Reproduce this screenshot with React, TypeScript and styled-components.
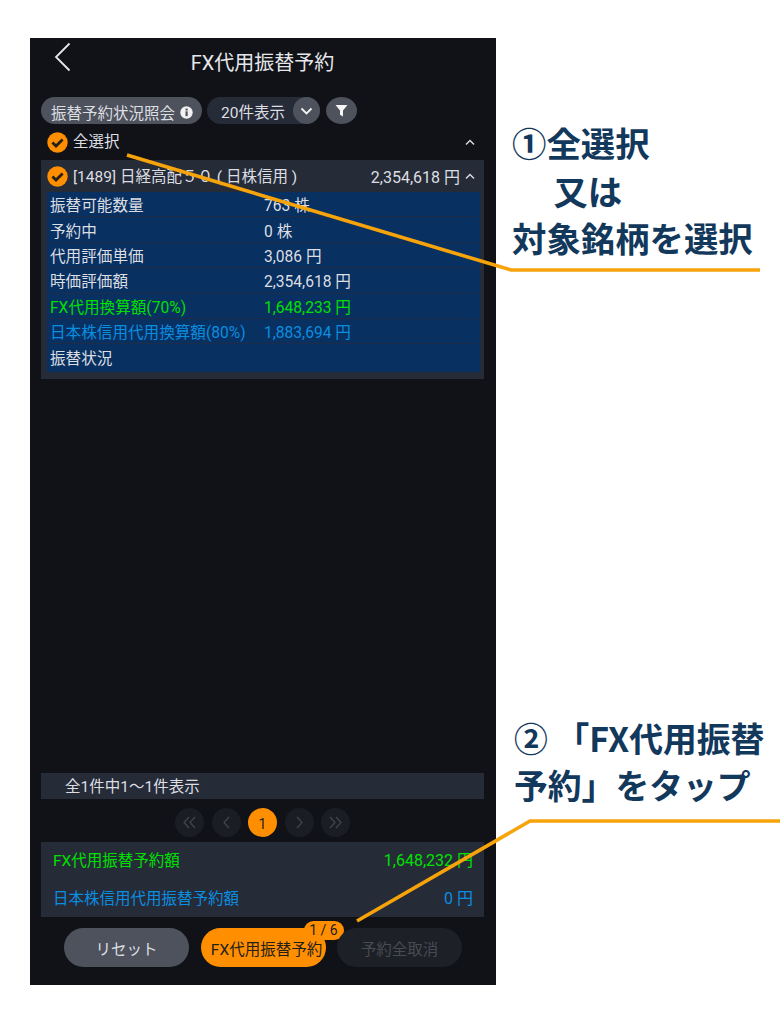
import React from "react";
import styled, { createGlobalStyle } from "styled-components";

const Global = createGlobalStyle`
  html, body { margin: 0; padding: 0; background: #fff; }
  * { box-sizing: border-box; }
  body { font-family: Roboto, "Noto Sans CJK JP", sans-serif; }
`;

const Page = styled.div`
  position: relative;
  width: 780px;
  height: 1024px;
  overflow: hidden;
  padding: 38px 0 39px 30px;
  display: flex;
  background: #fff;
`;
const Phone = styled.main`
  width: 466px;
  height: 947px;
  background: #101218;
  color: #dcdee2;
  padding: 0 12px 0 11px;
  display: flex;
  flex-direction: column;
  flex: none;
`;
const Header = styled.header`
  height: 46px;
  position: relative;
  display: flex;
  align-items: center;
  justify-content: center;
  font-size: 20px;
  padding-top: 1px;
  margin-bottom: 13px;
  color: #e6e7ea;
`;
const Back = styled.svg`
  position: absolute;
  left: 13px;
  top: 4px;
  width: 18px;
  height: 30px;
`;
const Chips = styled.div`
  display: flex;
  align-items: center;
  height: 27px;
`;
const StatusChip = styled.div`
  width: 161px;
  height: 27px;
  border-radius: 14px;
  background: #4e525c;
  display: flex;
  align-items: center;
  gap: 5px;
  padding: 2px 0 0 10px;
  font-size: 15.5px;
  white-space: nowrap;
  & > svg { margin-top: 1px; }
`;
const CountChip = styled.div`
  width: 113px;
  height: 27px;
  border-radius: 14px;
  background: #262b38;
  margin-left: 5px;
  display: flex;
  align-items: center;
  justify-content: space-between;
  padding-left: 14px;
  font-size: 15.5px;
`;
const RoundIcon = styled.span`
  width: 27px;
  height: 27px;
  border-radius: 50%;
  background: #4e525c;
  display: flex;
  align-items: center;
  justify-content: center;
`;
const FilterIcon = styled(RoundIcon)`
  width: 31px;
  margin-left: 6px;
`;
const SelectAll = styled.div`
  height: 36px;
  display: flex;
  align-items: center;
  padding: 0 9px 0 6px;
  gap: 6px;
  font-size: 15.5px;
  & > span { flex: 1; margin-top: -4px; margin-left: -1px; }
`;
const Card = styled.section`
  height: 219px;
  background: #262b38;
  padding: 0 4px 7px 6px;
  display: flex;
  flex-direction: column;
`;
const CardHead = styled.div`
  height: 32px;
  display: flex;
  align-items: center;
  gap: 6px;
  font-size: 15.5px;
  padding-right: 5px;
  white-space: pre;
`;
const CardTitle = styled.span`
  flex: 1;
  margin: -3px 0 0 -1px;
`;
const CardPrice = styled.span`
  font-size: 16px;
  margin-right: -1px;
`;
const Table = styled.div`
  background: #083060;
  flex: 1;
  padding: 0 3px;
`;
const Row = styled.div<{ $tone?: string }>`
  height: 25.4px;
  display: flex;
  align-items: center;
  font-size: 15.6px;
  color: ${(p) => p.$tone ?? "#dcdee2"};
  border-bottom: 1px solid #1d2c48;
  white-space: nowrap;
  &:last-child { border-bottom: none; }
`;
const RowLabel = styled.span`
  width: 214px;
`;
const Spacer = styled.div`
  flex: 1;
`;
const InfoBar = styled.div`
  height: 26px;
  background: #262b38;
  display: flex;
  align-items: center;
  padding: 0 0 2px 24px;
  font-size: 15.5px;
`;
const Pager = styled.nav`
  height: 43px;
  display: flex;
  align-items: center;
  justify-content: center;
  gap: 7.5px;
  padding-top: 3px;
`;
const PageDot = styled.span<{ $active?: boolean }>`
  width: 29px;
  height: 29px;
  border-radius: 50%;
  background: ${(p) => (p.$active ? "#ff8f00" : "#1a1d24")};
  color: #23201a;
  font-size: 14px;
  display: flex;
  align-items: center;
  justify-content: center;
  padding-top: ${(p) => (p.$active ? "4px" : "0")};
`;
const Summary = styled.section`
  height: 75px;
  background: #262b38;
  padding: 5px 11px 8px 12px;
  display: flex;
  flex-direction: column;
  justify-content: space-between;
`;
const SummaryRow = styled.div<{ $tone: string }>`
  display: flex;
  justify-content: space-between;
  align-items: center;
  color: ${(p) => p.$tone};
  font-size: 15.5px;
`;
const SummaryValue = styled.span`
  font-size: 16px;
`;
const Actions = styled.footer`
  height: 68px;
  display: flex;
  gap: 11.5px;
  padding: 11px 0 0 23px;
`;
const Action = styled.button<{ $bg: string; $fg: string; $shift?: number }>`
  position: relative;
  width: 125px;
  height: 39px;
  border: 0;
  padding: 0 0 0 ${(p) => p.$shift ?? 0}px;
  border-radius: 20px;
  background: ${(p) => p.$bg};
  color: ${(p) => p.$fg};
  font: inherit;
  font-size: 15.5px;
  white-space: nowrap;
`;
const Badge = styled.span`
  position: absolute;
  top: -7px;
  right: -18px;
  width: 40px;
  height: 19px;
  border-radius: 10px;
  background: #ff8f00;
  color: #23201a;
  font-size: 14px;
  line-height: 18px;
  text-align: center;
`;
const Notes = styled.aside`
  flex: 1;
  display: flex;
  flex-direction: column;
  color: #12385c;
  font-family: "Noto Sans CJK JP", sans-serif;
  font-weight: 700;
  white-space: pre;
`;
const NoteOne = styled.p`
  margin: 81px 0 0 16px;
  font-size: 34.4px;
  line-height: 47.5px;
`;
const Indented = styled.span`
  margin-left: 7px;
`;
const NoteTwo = styled.p`
  margin: 452px 0 0 18px;
  font-size: 33.8px;
  line-height: 47px;
`;
const Leaders = styled.svg`
  position: absolute;
  inset: 0;
  width: 780px;
  height: 1024px;
  pointer-events: none;
`;

const CheckMark = () => (
  <svg width="21" height="21" viewBox="0 0 21 21">
    <circle cx="10.5" cy="10.5" r="10.2" fill="#ff8f00" />
    <path d="M5.4 10.6l3.6 3.5 6.6-6.6" fill="none" stroke="#241f18" strokeWidth="2.8" />
  </svg>
);
const Caret = () => (
  <svg width="10" height="7" viewBox="0 0 10 7">
    <path d="M1 5.5L5 1.5l4 4" fill="none" stroke="#dcdee2" strokeWidth="1.4" />
  </svg>
);
const PageChevron = ({ d }: { d: string }) => (
  <svg width="17" height="15" viewBox="0 0 17 15">
    <path d={d} fill="none" stroke="#41444b" strokeWidth="1.3" />
  </svg>
);

const rows: [string, string, string?][] = [
  ["振替可能数量", "763 株"],
  ["予約中", "0 株"],
  ["代用評価単価", "3,086 円"],
  ["時価評価額", "2,354,618 円"],
  ["FX代用換算額(70%)", "1,648,233 円", "#00e000"],
  ["日本株信用代用換算額(80%)", "1,883,694 円", "#0a8ee0"],
  ["振替状況", ""],
];

export default function App() {
  return (
    <Page>
      <Global />
      <Phone>
        <Header>
          <Back viewBox="0 0 18 30">
            <path d="M15.5 1.5L2 15l13.5 13.5" fill="none" stroke="#e6e7ea" strokeWidth="1.8" />
          </Back>
          FX代用振替予約
        </Header>
        <Chips>
          <StatusChip>
            振替予約状況照会
            <svg width="13" height="13" viewBox="0 0 13 13">
              <circle cx="6.5" cy="6.5" r="6.2" fill="#f2f2f2" />
              <rect x="5.5" y="5.3" width="2.2" height="4.8" fill="#4e525c" />
              <rect x="5.5" y="2.6" width="2.2" height="1.9" fill="#4e525c" />
            </svg>
          </StatusChip>
          <CountChip>
            20件表示
            <RoundIcon>
              <svg width="13" height="8" viewBox="0 0 13 8">
                <path d="M1.5 1.5l5 5 5-5" fill="none" stroke="#f2f2f2" strokeWidth="1.8" />
              </svg>
            </RoundIcon>
          </CountChip>
          <FilterIcon>
            <svg width="13" height="13" viewBox="0 0 13 13">
              <path d="M0.5 1h12L8 6.5V12.5L5 10.8V6.5z" fill="#f6f6f6" />
            </svg>
          </FilterIcon>
        </Chips>
        <SelectAll>
          <CheckMark />
          <span>全選択</span>
          <Caret />
        </SelectAll>
        <Card>
          <CardHead>
            <CheckMark />
            <CardTitle>[1489] 日経高配５０ ( 日株信用 )</CardTitle>
            <CardPrice>2,354,618 円</CardPrice>
            <Caret />
          </CardHead>
          <Table>
            {rows.map(([label, value, tone]) => (
              <Row key={label} $tone={tone}>
                <RowLabel>{label}</RowLabel>
                <span>{value}</span>
              </Row>
            ))}
          </Table>
        </Card>
        <Spacer />
        <InfoBar>全1件中1～1件表示</InfoBar>
        <Pager>
          <PageDot><PageChevron d="M8 2L3 7.5 8 13M14 2L9 7.5l5 5.5" /></PageDot>
          <PageDot><PageChevron d="M11 2L6 7.5l5 5.5" /></PageDot>
          <PageDot $active>1</PageDot>
          <PageDot><PageChevron d="M6 2l5 5.5L6 13" /></PageDot>
          <PageDot><PageChevron d="M3 2l5 5.5L3 13M9 2l5 5.5L9 13" /></PageDot>
        </Pager>
        <Summary>
          <SummaryRow $tone="#00e000">
            <span>FX代用振替予約額</span>
            <SummaryValue>1,648,232 円</SummaryValue>
          </SummaryRow>
          <SummaryRow $tone="#0a8ee0">
            <span>日本株信用代用振替予約額</span>
            <SummaryValue>0 円</SummaryValue>
          </SummaryRow>
        </Summary>
        <Actions>
          <Action $bg="#4e525c" $fg="#dcdee2">リセット</Action>
          <Action $bg="#ff8f00" $fg="#23201a" $shift={7}>
            FX代用振替予約
            <Badge>1 / 6</Badge>
          </Action>
          <Action $bg="#1d2027" $fg="#484b52">予約全取消</Action>
        </Actions>
      </Phone>
      <Notes>
        <NoteOne>
          {"①全選択\n"}
          <Indented>{"　又は"}</Indented>
          {"\n対象銘柄を選択"}
        </NoteOne>
        <NoteTwo>{"② 「FX代用振替\n予約」をタップ"}</NoteTwo>
      </Notes>
      <Leaders viewBox="0 0 780 1024">
        <path d="M127 155L511 270H760" fill="none" stroke="#f7a30a" strokeWidth="3.6" />
        <path d="M357 921L530 821H780" fill="none" stroke="#f7a30a" strokeWidth="3.6" />
      </Leaders>
    </Page>
  );
}
